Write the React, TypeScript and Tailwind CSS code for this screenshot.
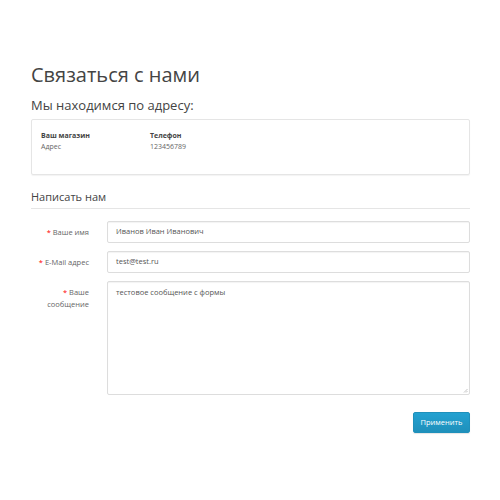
import React from 'react';

const fields = [
  { label: 'Ваше имя', value: 'Иванов Иван Иванович' },
  { label: 'E-Mail адрес', value: 'test@test.ru' },
];

export default function App() {
  return (
    <div className="min-h-[500px] w-[500px] bg-white font-['Open_Sans',sans-serif] text-[#666]">
      <div className="pl-[31px] pr-[30px] pt-[62px]">
        <h1 className="text-[20px] leading-[25px] text-[#444]">Связаться с нами</h1>
        <h2 className="mt-[10px] text-[13px] leading-[16px] text-[#444]">Мы находимся по адресу:</h2>

        {/* Store info */}
        <div className="mt-[6px] h-[56px] rounded-[2px] border border-[#e5e5e5] shadow-[0_1px_1px_rgba(0,0,0,0.05)] px-[9px] pt-[10px]">
          <div className="flex text-[7px] leading-[11px]">
            <div className="w-[109px]">
              <div className="font-bold text-[#444]">Ваш магазин</div>
              <div>Адрес</div>
            </div>
            <div>
              <div className="font-bold text-[#444]">Телефон</div>
              <div>123456789</div>
            </div>
          </div>
        </div>

        {/* Form */}
        <div className="mt-[14px] border-b border-[#e5e5e5] pb-[3px] text-[11px] leading-[16px] text-[#444]">
          Написать нам
        </div>

        <div className="mt-[12px] flex flex-col gap-[8px]">
          {fields.map((f) => (
            <div key={f.label} className="flex items-center">
              <label className="w-[76px] pr-[18px] text-right text-[7.5px] leading-[11px]">
                <span className="text-[#f00]">* </span>
                {f.label}
              </label>
              <div className="flex h-[22px] flex-1 items-center rounded-[2px] border border-[#ddd] px-[8px] text-[7.5px] text-[#555] shadow-[inset_0_1px_1px_rgba(0,0,0,0.05)]">
                {f.value}
              </div>
            </div>
          ))}

          <div className="flex">
            <label className="w-[76px] pr-[18px] pt-[5px] text-right text-[7.5px] leading-[12px]">
              <span className="block">
                <span className="text-[#f00]">* </span>
                Ваше
              </span>
              <span className="block">сообщение</span>
            </label>
            <div className="relative h-[114px] flex-1 rounded-[2px] border border-[#ddd] px-[8px] pt-[5px] text-[7.5px] text-[#555] shadow-[inset_0_1px_1px_rgba(0,0,0,0.05)]">
              тестовое сообщение с формы
              <svg className="absolute bottom-[1px] right-[1px]" width="5" height="5" viewBox="0 0 5 5">
                <path d="M4.5 1 L1 4.5 M4.5 3 L3 4.5" stroke="#aaa" strokeWidth="0.7" />
              </svg>
            </div>
          </div>
        </div>

        <div className="mt-[17px] flex justify-end">
          <button className="h-[21px] w-[57px] rounded-[2px] border border-[#1f90bb] bg-gradient-to-b from-[#23a1d1] to-[#1f90bb] text-[7.5px] text-white shadow-[0_1px_1px_rgba(0,0,0,0.1)]">
            Применить
          </button>
        </div>
      </div>
    </div>
  );
}
